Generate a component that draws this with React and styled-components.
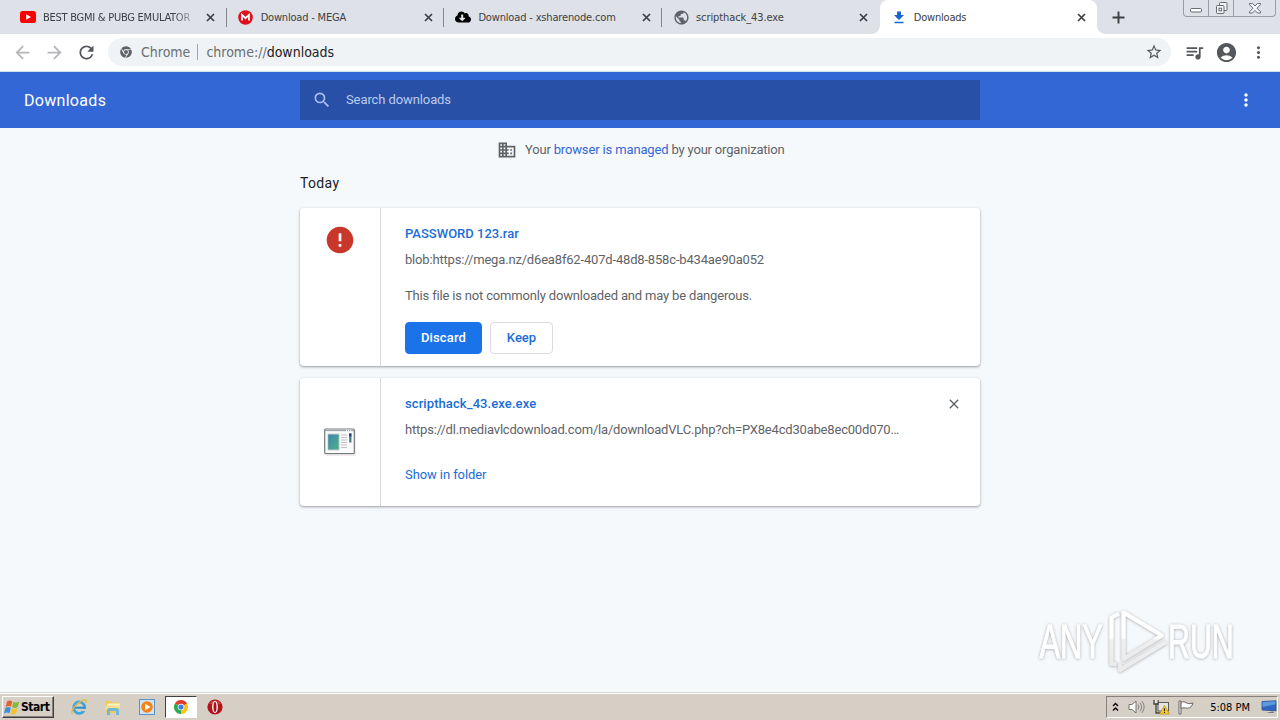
import React from "react";
import styled, { createGlobalStyle, css } from "styled-components";
import {
  MdArrowBack, MdArrowForward, MdRefresh, MdStarBorder, MdQueueMusic, MdAccountCircle,
  MdMoreVert, MdSearch, MdBusiness, MdError, MdClose, MdPublic,
} from "react-icons/md";
import { FaChrome, FaCloudDownloadAlt } from "react-icons/fa";

const ui = `"DejaVu Sans Condensed", "DejaVu Sans", sans-serif`;
const web = `Roboto, sans-serif`;

const GlobalStyle = createGlobalStyle`
  * { box-sizing: border-box; }
  body { margin: 0; overflow: hidden; background: #f6f9fc; }
  svg { display: block; flex: none; }
  button { font: inherit; }
`;

const Desktop = styled.div`
  width: 1280px;
  height: 720px;
  display: flex;
  flex-direction: column;
  overflow: hidden;
`;

/* ---------- tab strip ---------- */
const TabStrip = styled.div`
  height: 34px;
  flex: none;
  display: flex;
  padding-left: 9px;
  background: #dee1e7;
`;
const Tab = styled.div`
  position: relative;
  width: 217.7px;
  height: 34px;
  display: flex;
  align-items: center;
  padding: 0 8px 0 11px;
  font: 11px ${ui};
  color: #3c4043;
  ${p => p.$active && css`
    background: #fff;
    border-radius: 8px 8px 0 0;
    &::before, &::after {
      content: "";
      position: absolute;
      bottom: 0;
      width: 8px;
      height: 8px;
    }
    &::before { left: -8px; background: radial-gradient(circle at 0 0, transparent 7.5px, #fff 8px); }
    &::after { right: -8px; background: radial-gradient(circle at 100% 0, transparent 7.5px, #fff 8px); }
  `}
`;
const Favicon = styled.span`
  width: 16px;
  height: 16px;
  display: grid;
  place-items: center;
  margin-right: 7px;
`;
const TabTitle = styled.span`
  flex: 1;
  height: 16px;
  line-height: 17px;
  overflow: hidden;
  white-space: nowrap;
  letter-spacing: ${p => p.$ls}px;
  ${p => p.$fade && css`mask-image: linear-gradient(90deg, #000 130px, transparent 158px);`}
`;
const TabClose = styled.span`
  width: 16px;
  display: grid;
  place-items: center;
  margin-left: 6px;
  color: #3c4043;
`;
const TabDivider = styled.i`
  position: absolute;
  right: 0;
  top: 8px;
  width: 1px;
  height: 19px;
  background: #85898f;
`;
const NewTab = styled.div`
  width: 43px;
  display: grid;
  place-items: center;
  color: #3c4043;
`;
const WindowControls = styled.div`
  margin: 0 4px 0 auto;
  height: 17px;
  display: grid;
  grid-template-columns: 24px 25px 42px;
  border: 1px solid #999da4;
  border-top: 0;
  border-radius: 0 0 4px 4px;
`;
const WindowButton = styled.span`
  display: grid;
  place-items: center;
  border-left: ${p => (p.$first ? "0" : "1px solid #999da4")};
`;

/* ---------- toolbar ---------- */
const Toolbar = styled.div`
  height: 38px;
  flex: none;
  display: flex;
  align-items: center;
  padding: 0 6px 1px 11px;
  background: #fff;
  border-bottom: 1px solid #cfe6e6;
  color: #54585c;
`;
const ToolButton = styled.span`
  width: ${p => p.$w || 32}px;
  height: 28px;
  flex: none;
  display: grid;
  place-items: center;
  color: ${p => (p.$off ? "#b3b5b8" : "#54585c")};
`;
const Omnibox = styled.div`
  width: 1063px;
  flex: none;
  height: 28px;
  margin: 0 7px 0 11px;
  padding: 0 8px 0 12px;
  display: flex;
  align-items: center;
  border-radius: 14px;
  background: #f0f3f5;
  font: 14px/28px ${ui};
  color: #696e73;
`;
const Origin = styled.span`margin-left: 9px;`;
const OmniDivider = styled.i`width: 1px; height: 16px; margin: 0 8px 0 7px; background: #a3a7ab;`;
const Url = styled.span`flex: 1; b { font-weight: 400; color: #202124; }`;

/* ---------- downloads page ---------- */
const Header = styled.header`
  height: 56px;
  flex: none;
  display: grid;
  grid-template-columns: 276px 680px 1fr;
  align-items: center;
  padding: 0 24px;
  background: #3367d6;
  color: #fff;
  font-family: ${web};
`;
const PageTitle = styled.div`font-size: 16px; letter-spacing: .3px; padding-top: 1px;`;
const Search = styled.div`
  height: 40px;
  display: flex;
  align-items: center;
  gap: 14px;
  padding-left: 12px;
  background: #2850a7;
  color: #a9bfee;
  font-size: 13px;
  letter-spacing: -.1px;
`;
const Placeholder = styled.span`padding-bottom: 2px; color: #bccbef;`;
const MenuButton = styled.div`justify-self: end;`;
const Page = styled.main`
  position: relative;
  flex: 1;
  min-height: 0;
  background: #f6f9fc;
  font: 13px/20px ${web};
  color: #5f6368;
`;
const Column = styled.div`width: 680px; margin: 0 auto;`;
const Managed = styled.div`
  height: 44px;
  display: flex;
  align-items: center;
  padding-left: 197px;
  gap: 8px;
  letter-spacing: -.19px;
  white-space: nowrap;
  a { color: #3367d6; letter-spacing: -.14px; }
`;
const Day = styled.h2`
  height: 20px;
  margin: 0 0 16px;
  font: 400 14px/22px ${web};
  letter-spacing: .35px;
  color: #202124;
`;
const Card = styled.article`
  display: flex;
  height: ${p => p.$h}px;
  margin-bottom: 12px;
  background: #fff;
  border-radius: 4px;
  box-shadow: 0 1px 2px rgba(60, 64, 67, .35), 0 1px 3px 1px rgba(60, 64, 67, .13);
`;
const IconCell = styled.div`
  width: 81px;
  display: flex;
  justify-content: center;
  align-items: ${p => (p.$center ? "center" : "flex-start")};
  padding-top: ${p => (p.$center ? 0 : 16)}px;
  border-right: 1px solid #dadce0;
`;
const Details = styled.div`flex: 1; padding: 16px 18px 0 24px; white-space: nowrap;`;
const TitleRow = styled.div`display: flex; justify-content: space-between; height: 20px; align-items: center;`;
const FileName = styled.a`font-weight: 500; color: #1a6dd9; letter-spacing: ${p => p.$ls || 0}px;`;
const Source = styled.div`margin-top: 6px; letter-spacing: ${p => p.$ls}px;`;
const Warning = styled.div`margin-top: 16px; letter-spacing: -.175px;`;
const Actions = styled.div`display: flex; gap: 8px; margin-top: 16px;`;
const Button = styled.button`
  width: ${p => p.$w}px;
  height: 32px;
  padding: 0;
  border: 1px solid ${p => (p.$primary ? "#1a73e8" : "#dadce0")};
  border-radius: 4px;
  background: ${p => (p.$primary ? "#1a73e8" : "#fff")};
  color: ${p => (p.$primary ? "#fff" : "#1a6dd9")};
  font-weight: 500;
  letter-spacing: ${p => (p.$primary ? 0.15 : 0)}px;
`;
const ShowLink = styled.a`display: block; margin-top: 25px; color: #1a6dd9; letter-spacing: -.09px;`;
const RemoveButton = styled.span`color: #5f6368;`;
const Watermark = styled.svg`position: absolute; right: 40px; bottom: 14px;`;

/* ---------- taskbar ---------- */
const Taskbar = styled.footer`
  height: 28px;
  flex: none;
  display: flex;
  align-items: center;
  padding: 1px 2px 0;
  background: #d5cfc6;
  border-top: 1px solid #d9d8d4;
  box-shadow: inset 0 1px #fff;
  font: 11px ${ui};
  color: #000;
`;
const Start = styled.div`
  width: 52px;
  height: 22px;
  display: flex;
  align-items: center;
  padding-left: 1px;
  border: 1px solid;
  border-color: #fff #404040 #404040 #fff;
  box-shadow: inset -1px -1px #86827b;
  font-size: 12px;
  font-weight: 700;
  letter-spacing: -.45px;
`;
const Launcher = styled.div`display: flex; align-items: center; margin-left: 8px;`;
const TaskIcon = styled.span`
  width: 34px;
  height: 22px;
  display: grid;
  place-items: center;
`;
const RunningTask = styled(TaskIcon)`
  width: 32px;
  margin: 0 1px;
  background: #fff;
  border: 1px solid;
  border-color: #404040 #fff #fff #404040;
`;
const Tray = styled.div`
  width: 172px;
  height: 22px;
  margin-left: auto;
  display: flex;
  align-items: center;
  padding-left: 4px;
  border: 1px solid;
  border-color: #86827b #fff #fff #86827b;
`;
const TrayIcon = styled.span`width: ${p => p.$w}px; display: grid; place-items: center;`;
const Clock = styled.span`margin: 0 11px 0 9px; white-space: nowrap;`;

/* ---------- drawings ---------- */
const TabCross = () => (
  <svg width="9" height="9" viewBox="0 0 9 9"><path d="m1 1 7 7M8 1 1 8" stroke="currentColor" strokeWidth="1.7" /></svg>
);
const Plus = () => (
  <svg width="13" height="13" viewBox="0 0 13 13"><path d="M6.500 .5v12M.5 6.500h12" stroke="currentColor" strokeWidth="1.900" /></svg>
);
const YouTube = () => (
  <svg width="16" height="12" viewBox="0 0 16 12">
    <rect width="16" height="12" rx="2.8" fill="#f00" /><path d="M6.2 3.3v5.4L11 6z" fill="#fff" />
  </svg>
);
const Mega = () => (
  <svg width="15" height="15" viewBox="0 0 15 15">
    <circle cx="7.5" cy="7.5" r="7.3" fill="#dc1020" />
    <path d="M4 10.6V4.8l3.5 3.4L11 4.8v5.8" fill="none" stroke="#fff" strokeWidth="1.7" />
  </svg>
);
const DownloadGlyph = () => (
  <svg width="12" height="13" viewBox="0 0 12 13" fill="#1a66d0">
    <path d="M4 .5h4v3.500h3L6 9 1 4h3zM1.500 10.700h9v1.500h-9z" />
  </svg>
);
const Minimize = () => (
  <svg width="14" height="17" viewBox="0 0 14 17"><rect x="1.5" y="8.5" width="11" height="3.5" rx="1" fill="#fff" stroke="#666b73" /></svg>
);
const Restore = () => (
  <svg width="15" height="17" viewBox="0 0 15 17" fill="#f4f5f7" stroke="#666b73">
    <rect x="5.5" y="2.5" width="7.5" height="8" rx="1" /><rect x="2.5" y="5.5" width="7.5" height="8" rx="1" /><rect x="5" y="8.2" width="2.6" height="2.6" />
  </svg>
);
const WinClose = () => (
  <svg width="14" height="17" viewBox="0 0 14 17">
    <path d="M1.500 3.500h3L7 6l2.500-2.500h3v1.200L9 8.200l3.500 3.600V13h-3L7 10.400 4.500 13h-3v-1.200L5 8.200 1.500 4.700z" fill="#f4f5f7" stroke="#666b73" />
  </svg>
);
const ExeIcon = () => (
  <svg width="32" height="28" viewBox="0 0 32 28">
    <defs><linearGradient id="screen" x1="0" y1="0" x2="1" y2="1"><stop offset="0" stopColor="#3f87a8" /><stop offset="1" stopColor="#4fb08a" /></linearGradient></defs>
    <rect x="1.500" y="2" width="30" height="25.500" rx="1" fill="#bbb" opacity=".5" />
    <rect x=".7" y="1" width="29.600" height="24.500" rx="1" fill="#fafafa" stroke="#777b80" strokeWidth="1.200" />
    <path d="M1 2.500h29" stroke="#a3a7ab" strokeWidth="1.300" />
    <path d="M22 2.400h6" stroke="#fff" strokeWidth="1" strokeDasharray="1 1" />
    <rect x="3.500" y="5.500" width="12" height="17" fill="#c9cdd0" /><rect x="4.200" y="6.500" width="10.500" height="15" fill="url(#screen)" />
    <path d="M17 7h6M17 9.500h6M17 12h6M17 14.500h6M17 17h6M17 19.500h6" stroke="#c4bfcb" />
    <rect x="25.200" y="5.500" width="2.200" height="9" fill="#3c7c86" /><path d="M25.200 5.500h2.200v3h-2.200z" fill="#283a78" />
  </svg>
);
const WindowsFlag = () => (
  <svg width="17" height="17" viewBox="0 0 17 17">
    <path d="M3 2.500C5 1 6.500 1.200 8.300 2.200L7 7.800C5.300 6.800 3.700 6.900 1.700 8z" fill="#e8612c" />
    <path d="M9.300 2.700c2 1 3.700.9 6-.3L13.700 8c-2 1.200-3.700 1.200-5.600.3z" fill="#83ba3a" />
    <path d="M1.400 9c2-1.200 3.600-1.200 5.400-.3l-1.400 5.500C3.600 13.300 2 13.300 0 14.500z" fill="#3a91d8" />
    <path d="M7.800 9.200c2 1 3.600.9 5.700-.3L12 14.500c-2 1.200-3.700 1.200-5.600.2z" fill="#f6c22d" />
  </svg>
);
const Explorer = () => (
  <svg width="18" height="18" viewBox="0 0 18 18" fill="none">
    <ellipse cx="9.200" cy="9.700" rx="5.600" ry="5.800" stroke="#3aa5de" strokeWidth="2.700" />
    <path d="M4 9.700h11" stroke="#2a8fd0" strokeWidth="2" /><path d="M11.500 11h5v2h-5z" fill="#d5cfc6" />
    <path d="M2.500 16C0 13 6 5.500 12 2.600c3.200-1.500 5-.6 3.900 2.300" stroke="#e9bb3c" strokeWidth="1.400" />
  </svg>
);
const Folder = () => (
  <svg width="18" height="18" viewBox="0 0 18 18">
    <path d="M2 3h5l1 1.500h7V15H2z" fill="#efc95c" /><path d="M3.500 5.500h12V9h-12z" fill="#fdf5c9" />
    <path d="M1.500 7.500h14V12h-14z" fill="#f8df87" /><path d="M3 17v-4.500c0-1.800 1-2.500 2.500-2.500h7c1.500 0 2.500.7 2.500 2.500V17h-3v-4H6v4z" fill="#6fb8dc" />
  </svg>
);
const MediaPlayer = () => (
  <svg width="16" height="16" viewBox="0 0 16 16">
    <rect x=".5" y=".5" width="15" height="15" fill="#cfe3f4" stroke="#5b95c8" />
    <circle cx="8" cy="8" r="5.800" fill="#f28516" /><path d="M6.200 4.700v6.600L11.500 8z" fill="#fff" />
  </svg>
);
const ChromeLogo = () => (
  <svg width="14" height="14" viewBox="0 0 24 24">
    <path d="M12 12 1.600 6A12 12 0 0 1 22.400 6z" fill="#e33b2e" />
    <path d="M12 12 22.400 6A12 12 0 0 1 12 24z" fill="#fbc116" />
    <path d="M12 12v12A12 12 0 0 1 1.600 6z" fill="#2da94f" />
    <circle cx="12" cy="12" r="5.600" fill="#fff" /><circle cx="12" cy="12" r="4.400" fill="#3b7ded" />
  </svg>
);
const Opera = () => (
  <svg width="16" height="16" viewBox="0 0 16 16">
    <circle cx="8" cy="8" r="7.600" fill="#b3141a" /><path d="M2 5a7 7 0 0 1 12 0z" fill="#dd5a55" opacity=".6" />
    <ellipse cx="8" cy="8" rx="2.900" ry="5.900" fill="#fff" /><ellipse cx="8" cy="8" rx="1.500" ry="5" fill="#a31216" />
  </svg>
);
const Chevrons = () => (
  <svg width="7" height="10" viewBox="0 0 7 10" fill="none" stroke="#000" strokeWidth="1.400"><path d="m1 4 2.500-2.500L6 4M1 8.500 3.500 6 6 8.500" /></svg>
);
const Speaker = () => (
  <svg width="17" height="16" viewBox="0 0 17 16" fill="none" stroke="#77736d">
    <path d="M1 5.500h3L8 2v12l-4-3.500H1z" fill="#fff" /><path d="M10 5.500q2 2.500 0 5M12 3.800q3.200 4.200 0 8.400M14 2.200q4.300 5.800 0 11.600" stroke="#8a867f" />
  </svg>
);
const Network = () => (
  <svg width="17" height="16" viewBox="0 0 17 16">
    <rect x="5" y="3.500" width="10.500" height="8.500" fill="#e5e5e0" stroke="#5b5b58" /><path d="M1 1v4h4V1M3 5v9h5" fill="none" stroke="#44423f" strokeWidth="1.300" />
    <path d="M2.500 1v3M4 1v3" stroke="#fff" strokeWidth=".7" /><path d="M11.500 6.500 16.500 15h-10z" fill="#f8cf2b" stroke="#b68d13" strokeWidth=".7" /><path d="M11.500 9.300v3M11.500 13v1" stroke="#222" strokeWidth="1.100" />
  </svg>
);
const Flag = () => (
  <svg width="16" height="15" viewBox="0 0 16 15" fill="#fff" stroke="#686560"><path d="M1 1h2v13H1z" /><path d="M3 2.500c2-1.500 4-.5 5 .2 2 1.300 4 1 7 .3-1 3-2.500 5.200-5.500 5.200C7 8 5.500 7.300 3 8.500z" /></svg>
);
const Monitor = () => (
  <svg width="16" height="14" viewBox="0 0 16 14"><path d="M1 1.500 15 .8v10L1 10z" fill="#2e67c0" stroke="#254b89" strokeWidth=".8" /><path d="M1.500 2 14.500 1.300v3L1.500 7z" fill="#5c9ae0" /><path d="M5 12.500 12 11.500l1 1.500z" fill="#5d6674" /></svg>
);

const AnyRun = () => (
  <Watermark width="204" height="74" viewBox="0 0 204 74">
    <defs>
      <linearGradient id="fade" gradientUnits="userSpaceOnUse" x1="0" y1="12" x2="0" y2="62"><stop offset=".44" stopColor="#fff" /><stop offset=".48" stopColor="#efefef" /><stop offset="1" stopColor="#ebebeb" /></linearGradient>
      <filter id="soft" x="-10%" y="-10%" width="120%" height="120%"><feDropShadow dx="0" dy="0.500" stdDeviation="1.500" floodColor="#96989a" floodOpacity=".85" /></filter>
    </defs>
    <g filter="url(#soft)" fill="url(#fade)" fontFamily="Liberation Sans, sans-serif" fontSize="49">
      <g stroke="url(#fade)" strokeWidth=".9">
        <text transform="translate(3.500 54) scale(.63 1)">ANY</text>
        <text transform="translate(132 54) scale(.62 1)">RUN</text>
      </g>
      <path d="M80.500 60H75.500V13.500L83 9.500M87.500 8.500 126 31.500 87.500 55zM84 59.500V66L130 38" fill="none" stroke="url(#fade)" strokeWidth="4.200" strokeLinejoin="round" />
    </g>
  </Watermark>
);

const tabs = [
  { title: "BEST BGMI & PUBG EMULATOR", ls: -0.25, icon: <YouTube />, fade: true },
  { title: "Download - MEGA", ls: -0.2, icon: <Mega /> },
  { title: "Download - xsharenode.com", ls: -0.16, icon: <FaCloudDownloadAlt size={16} color="#000" /> },
  { title: "scripthack_43.exe", ls: -0.1, icon: <MdPublic size={17} color="#5f6368" /> },
  { title: "Downloads", ls: -0.2, icon: <DownloadGlyph />, active: true },
];

export default function App() {
  return (
    <Desktop>
      <GlobalStyle />
      <TabStrip>
        {tabs.map((t, i) => (
          <Tab key={t.title} $active={t.active}>
            <Favicon>{t.icon}</Favicon>
            <TabTitle $ls={t.ls} $fade={t.fade}>{t.title}</TabTitle>
            <TabClose><TabCross /></TabClose>
            {i < 3 && <TabDivider />}
          </Tab>
        ))}
        <NewTab><Plus /></NewTab>
        <WindowControls>
          <WindowButton $first><Minimize /></WindowButton>
          <WindowButton><Restore /></WindowButton>
          <WindowButton><WinClose /></WindowButton>
        </WindowControls>
      </TabStrip>

      <Toolbar>
        <ToolButton $w={22} $off><MdArrowBack size={21} /></ToolButton>
        <ToolButton $w={42} $off><MdArrowForward size={21} /></ToolButton>
        <ToolButton $w={22}><MdRefresh size={21} /></ToolButton>
        <Omnibox>
          <FaChrome size={12} color="#5f6368" />
          <Origin>Chrome</Origin>
          <OmniDivider />
          <Url>chrome://<b>downloads</b></Url>
          <MdStarBorder size={18} color="#54585c" />
        </Omnibox>
        <ToolButton><MdQueueMusic size={21} /></ToolButton>
        <ToolButton><MdAccountCircle size={23} /></ToolButton>
        <ToolButton><MdMoreVert size={19} /></ToolButton>
      </Toolbar>

      <Header>
        <PageTitle>Downloads</PageTitle>
        <Search><MdSearch size={20} /><Placeholder>Search downloads</Placeholder></Search>
        <MenuButton><MdMoreVert size={20} /></MenuButton>
      </Header>

      <Page>
        <Column>
          <Managed>
            <MdBusiness size={20} />
            <span>Your <a>browser is managed</a> by your organization</span>
          </Managed>
          <Day>Today</Day>
          <Card $h={158}>
            <IconCell><MdError size={32} color="#c8372a" /></IconCell>
            <Details>
              <TitleRow><FileName>PASSWORD 123.rar</FileName></TitleRow>
              <Source $ls={-0.175}>blob:https://mega.nz/d6ea8f62-407d-48d8-858c-b434ae90a052</Source>
              <Warning>This file is not commonly downloaded and may be dangerous.</Warning>
              <Actions>
                <Button $w={77} $primary>Discard</Button>
                <Button $w={63}>Keep</Button>
              </Actions>
            </Details>
          </Card>
          <Card $h={128}>
            <IconCell $center><ExeIcon /></IconCell>
            <Details>
              <TitleRow>
                <FileName $ls={0.09}>scripthack_43.exe.exe</FileName>
                <RemoveButton><MdClose size={16} /></RemoveButton>
              </TitleRow>
              <Source $ls={-0.19}>https://dl.mediavlcdownload.com/la/downloadVLC.php?ch=PX8e4cd30abe8ec00d070…</Source>
              <ShowLink>Show in folder</ShowLink>
            </Details>
          </Card>
        </Column>
        <AnyRun />
      </Page>

      <Taskbar>
        <Start><WindowsFlag />Start</Start>
        <Launcher>
          <TaskIcon><Explorer /></TaskIcon>
          <TaskIcon><Folder /></TaskIcon>
          <TaskIcon><MediaPlayer /></TaskIcon>
          <RunningTask><ChromeLogo /></RunningTask>
          <TaskIcon><Opera /></TaskIcon>
        </Launcher>
        <Tray>
          <TrayIcon $w={10}><Chevrons /></TrayIcon>
          <TrayIcon $w={33}><Speaker /></TrayIcon>
          <TrayIcon $w={17}><Network /></TrayIcon>
          <TrayIcon $w={32}><Flag /></TrayIcon>
          <Clock>5:08 PM</Clock>
          <Monitor />
        </Tray>
      </Taskbar>
    </Desktop>
  );
}
